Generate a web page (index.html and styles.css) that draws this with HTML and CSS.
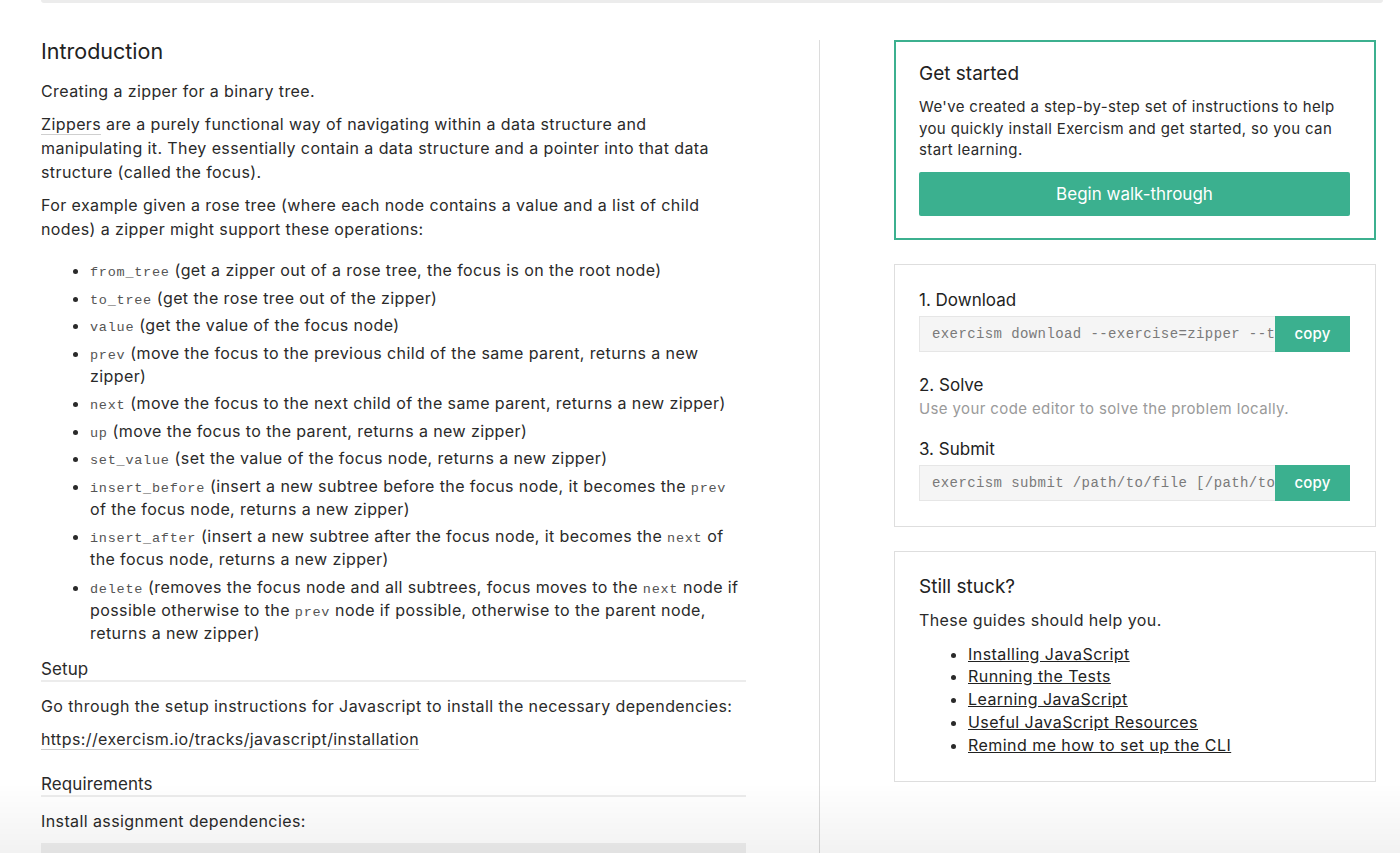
FILE: index.html
```html
<!DOCTYPE html>
<html lang="en">
<head>
<meta charset="utf-8">
<title>Zipper - JavaScript</title>
<link rel="stylesheet" href="styles.css">
</head>
<body>
<div class="topbar"></div>
<div class="page">
  <main class="main">
    <h2 class="title">Introduction</h2>
    <p>Creating a zipper for a binary tree.</p>
    <p><a class="soft-link" href="#">Zippers</a> are a purely functional way of navigating within a data structure and manipulating it. They essentially contain a data structure and a pointer into that data structure (called the focus).</p>
    <p class="p-last">For example given a rose tree (where each node contains a value and a list of child nodes) a zipper might support these operations:</p>
    <ul class="ops">
      <li><code>from_tree</code> (get a zipper out of a rose tree, the focus is on the root node)</li>
      <li><code>to_tree</code> (get the rose tree out of the zipper)</li>
      <li><code>value</code> (get the value of the focus node)</li>
      <li><code>prev</code> (move the focus to the previous child of the same parent, returns a new zipper)</li>
      <li><code>next</code> (move the focus to the next child of the same parent, returns a new zipper)</li>
      <li><code>up</code> (move the focus to the parent, returns a new zipper)</li>
      <li><code>set_value</code> (set the value of the focus node, returns a new zipper)</li>
      <li><code>insert_before</code> (insert a new subtree before the focus node, it becomes the <code>prev</code> of the focus node, returns a new zipper)</li>
      <li><code>insert_after</code> (insert a new subtree after the focus node, it becomes the <code>next</code> of the focus node, returns a new zipper)</li>
      <li><code>delete</code> (removes the focus node and all subtrees, focus moves to the <code>next</code> node if possible otherwise to the <code>prev</code> node if possible, otherwise to the parent node, returns a new zipper)</li>
    </ul>
    <h3 class="sub sub-first">Setup</h3>
    <p>Go through the setup instructions for Javascript to install the necessary dependencies:</p>
    <p><a class="soft-link" href="#">https://exercism.io/tracks/javascript/installation</a></p>
    <h3 class="sub">Requirements</h3>
    <p>Install assignment dependencies:</p>
    <pre class="codeblock"><code>$ npm install</code></pre>
  </main>
  <aside class="aside">
    <section class="card card-accent">
      <h3 class="card-title">Get started</h3>
      <p class="card-text">We've created a step-by-step set of instructions to help you quickly install Exercism and get started, so you can start learning.</p>
      <a class="btn-walk" href="#">Begin walk-through</a>
    </section>
    <section class="card card-steps">
      <h4 class="step-title">1. Download</h4>
      <div class="cmd">
        <div class="cmd-text">exercism download --exercise=zipper --track=javascript</div>
        <button class="cmd-copy">copy</button>
      </div>
      <h4 class="step-title step-gap">2. Solve</h4>
      <p class="step-note">Use your code editor to solve the problem locally.</p>
      <h4 class="step-title step-gap2">3. Submit</h4>
      <div class="cmd">
        <div class="cmd-text">exercism submit /path/to/file [/path/to/file2 ...]</div>
        <button class="cmd-copy">copy</button>
      </div>
    </section>
    <section class="card card-stuck">
      <h3 class="card-title">Still stuck?</h3>
      <p class="stuck-text">These guides should help you.</p>
      <ul class="guides">
        <li><a href="#">Installing JavaScript</a></li>
        <li><a href="#">Running the Tests</a></li>
        <li><a href="#">Learning JavaScript</a></li>
        <li><a href="#">Useful JavaScript Resources</a></li>
        <li><a href="#">Remind me how to set up the CLI</a></li>
      </ul>
    </section>
  </aside>
</div>
<div class="fade"></div>
</body>
</html>
```

FILE: styles.css
```css
* { box-sizing: border-box; }

html, body {
  margin: 0;
  padding: 0;
  background: #fff;
}

body {
  font-family: Inter, "Noto Sans", "Liberation Sans", sans-serif;
  color: #2a2a2a;
  font-size: 16px;
  line-height: 24px;
  letter-spacing: 0.4px;
  height: 853px;
  overflow: hidden;
}

.topbar {
  height: 3px;
  margin: 0 17px 0 41px;
  background: #ececec;
  border-radius: 0 0 3px 3px;
}

.page {
  display: flex;
  padding: 37px 0 0 41px;
}

.main {
  width: 779px;
  padding-right: 73px;
  border-right: 1px solid #dcdcdc;
  min-height: 820px;
}

.title {
  margin: 0 0 17px;
  font-size: 21.5px;
  line-height: 22px;
  font-weight: 400;
  letter-spacing: 0;
  color: #222;
}

.main p {
  margin: 0 0 9px;
}

.main .p-last { margin-bottom: 0; }

.soft-link {
  color: inherit;
  text-decoration: none;
  border-bottom: 1px solid #cfcfcf;
}

.ops {
  margin: 18px 0 0;
  padding-left: 49px;
}

.ops li {
  line-height: 23px;
  margin-bottom: 4.5px;
}

.ops li:last-child { margin-bottom: 0; }

code {
  font-family: "Liberation Mono", "DejaVu Sans Mono", monospace;
  font-size: 13.5px;
  line-height: 1;
  letter-spacing: 0.75px;
  color: #555;
}

.sub {
  margin: 22px 0 12px;
  font-size: 17px;
  line-height: 22px;
  font-weight: 400;
  letter-spacing: 0.1px;
  color: #2a2a2a;
  border-bottom: 2px solid #ececec;
}

.sub-first { margin-top: 13px; }

.main .sub + p { margin-top: 11px; }

.codeblock {
  margin: 10px 0 0;
  height: 60px;
  background: #efefef;
  padding: 12px 16px;
}

.codeblock code { color: #efefef; }

.aside {
  width: 482px;
  margin-left: 74px;
}

.card {
  border: 1px solid #dedede;
  padding: 23px 25px 25px 24px;
  margin-bottom: 24px;
}

.card-accent {
  border: 2px solid #3cb08f;
  padding: 20px 24px 22px 23px;
}

.card-title {
  margin: 0 0 9px;
  font-size: 19px;
  line-height: 24px;
  font-weight: 400;
  letter-spacing: 0;
  color: #222;
}

.card-accent .card-title { margin-bottom: 10px; }

.card-text {
  margin: 0 0 11px;
  font-size: 15px;
  line-height: 21.5px;
  letter-spacing: 0.37px;
  color: #2a2a2a;
}

.btn-walk {
  display: flex;
  align-items: center;
  justify-content: center;
  height: 44px;
  background: #3bb08f;
  color: #fff;
  text-decoration: none;
  font-size: 17px;
  letter-spacing: 0;
  border-radius: 2px;
}

.card-steps { padding-top: 24px; padding-bottom: 25px; }

.step-title {
  margin: 0 0 5px;
  font-size: 17px;
  line-height: 22px;
  font-weight: 400;
  letter-spacing: 0;
  color: #222;
}

.step-gap { margin-top: 22px; margin-bottom: 2px; }
.step-gap2 { margin-top: 18px; }

.step-note {
  margin: 0;
  font-size: 15px;
  line-height: 22px;
  letter-spacing: 0.38px;
  color: #9a9a9a;
}

.cmd {
  display: flex;
  height: 36px;
}

.cmd-text {
  flex: 1;
  min-width: 0;
  overflow: hidden;
  white-space: nowrap;
  background: #f5f5f5;
  border: 1px solid #e6e6e6;
  border-right: 0;
  padding: 0 0 0 12px;
  font-family: "Liberation Mono", "DejaVu Sans Mono", monospace;
  font-size: 14px;
  letter-spacing: 0.4px;
  line-height: 34px;
  color: #7a7a7a;
}

.cmd-copy {
  width: 75px;
  border: 0;
  background: #3bb08f;
  color: #fff;
  font-family: Inter, "Noto Sans", sans-serif;
  font-size: 15px;
  font-weight: 500;
  letter-spacing: 0.2px;
  padding: 0;
}

.card-stuck { padding-top: 23px; padding-bottom: 25px; }

.stuck-text {
  margin: 0 0 11px;
  font-size: 16px;
  line-height: 24px;
}

.guides {
  margin: 0;
  padding-left: 49px;
}

.guides li {
  font-size: 16px;
  line-height: 22.8px;
  letter-spacing: 0.45px;
}

.guides a {
  color: #222;
}

.fade {
  position: fixed;
  left: 0;
  right: 0;
  bottom: 0;
  height: 70px;
  background: linear-gradient(to bottom, rgba(0,0,0,0), rgba(0,0,0,0.05));
  pointer-events: none;
}
```
